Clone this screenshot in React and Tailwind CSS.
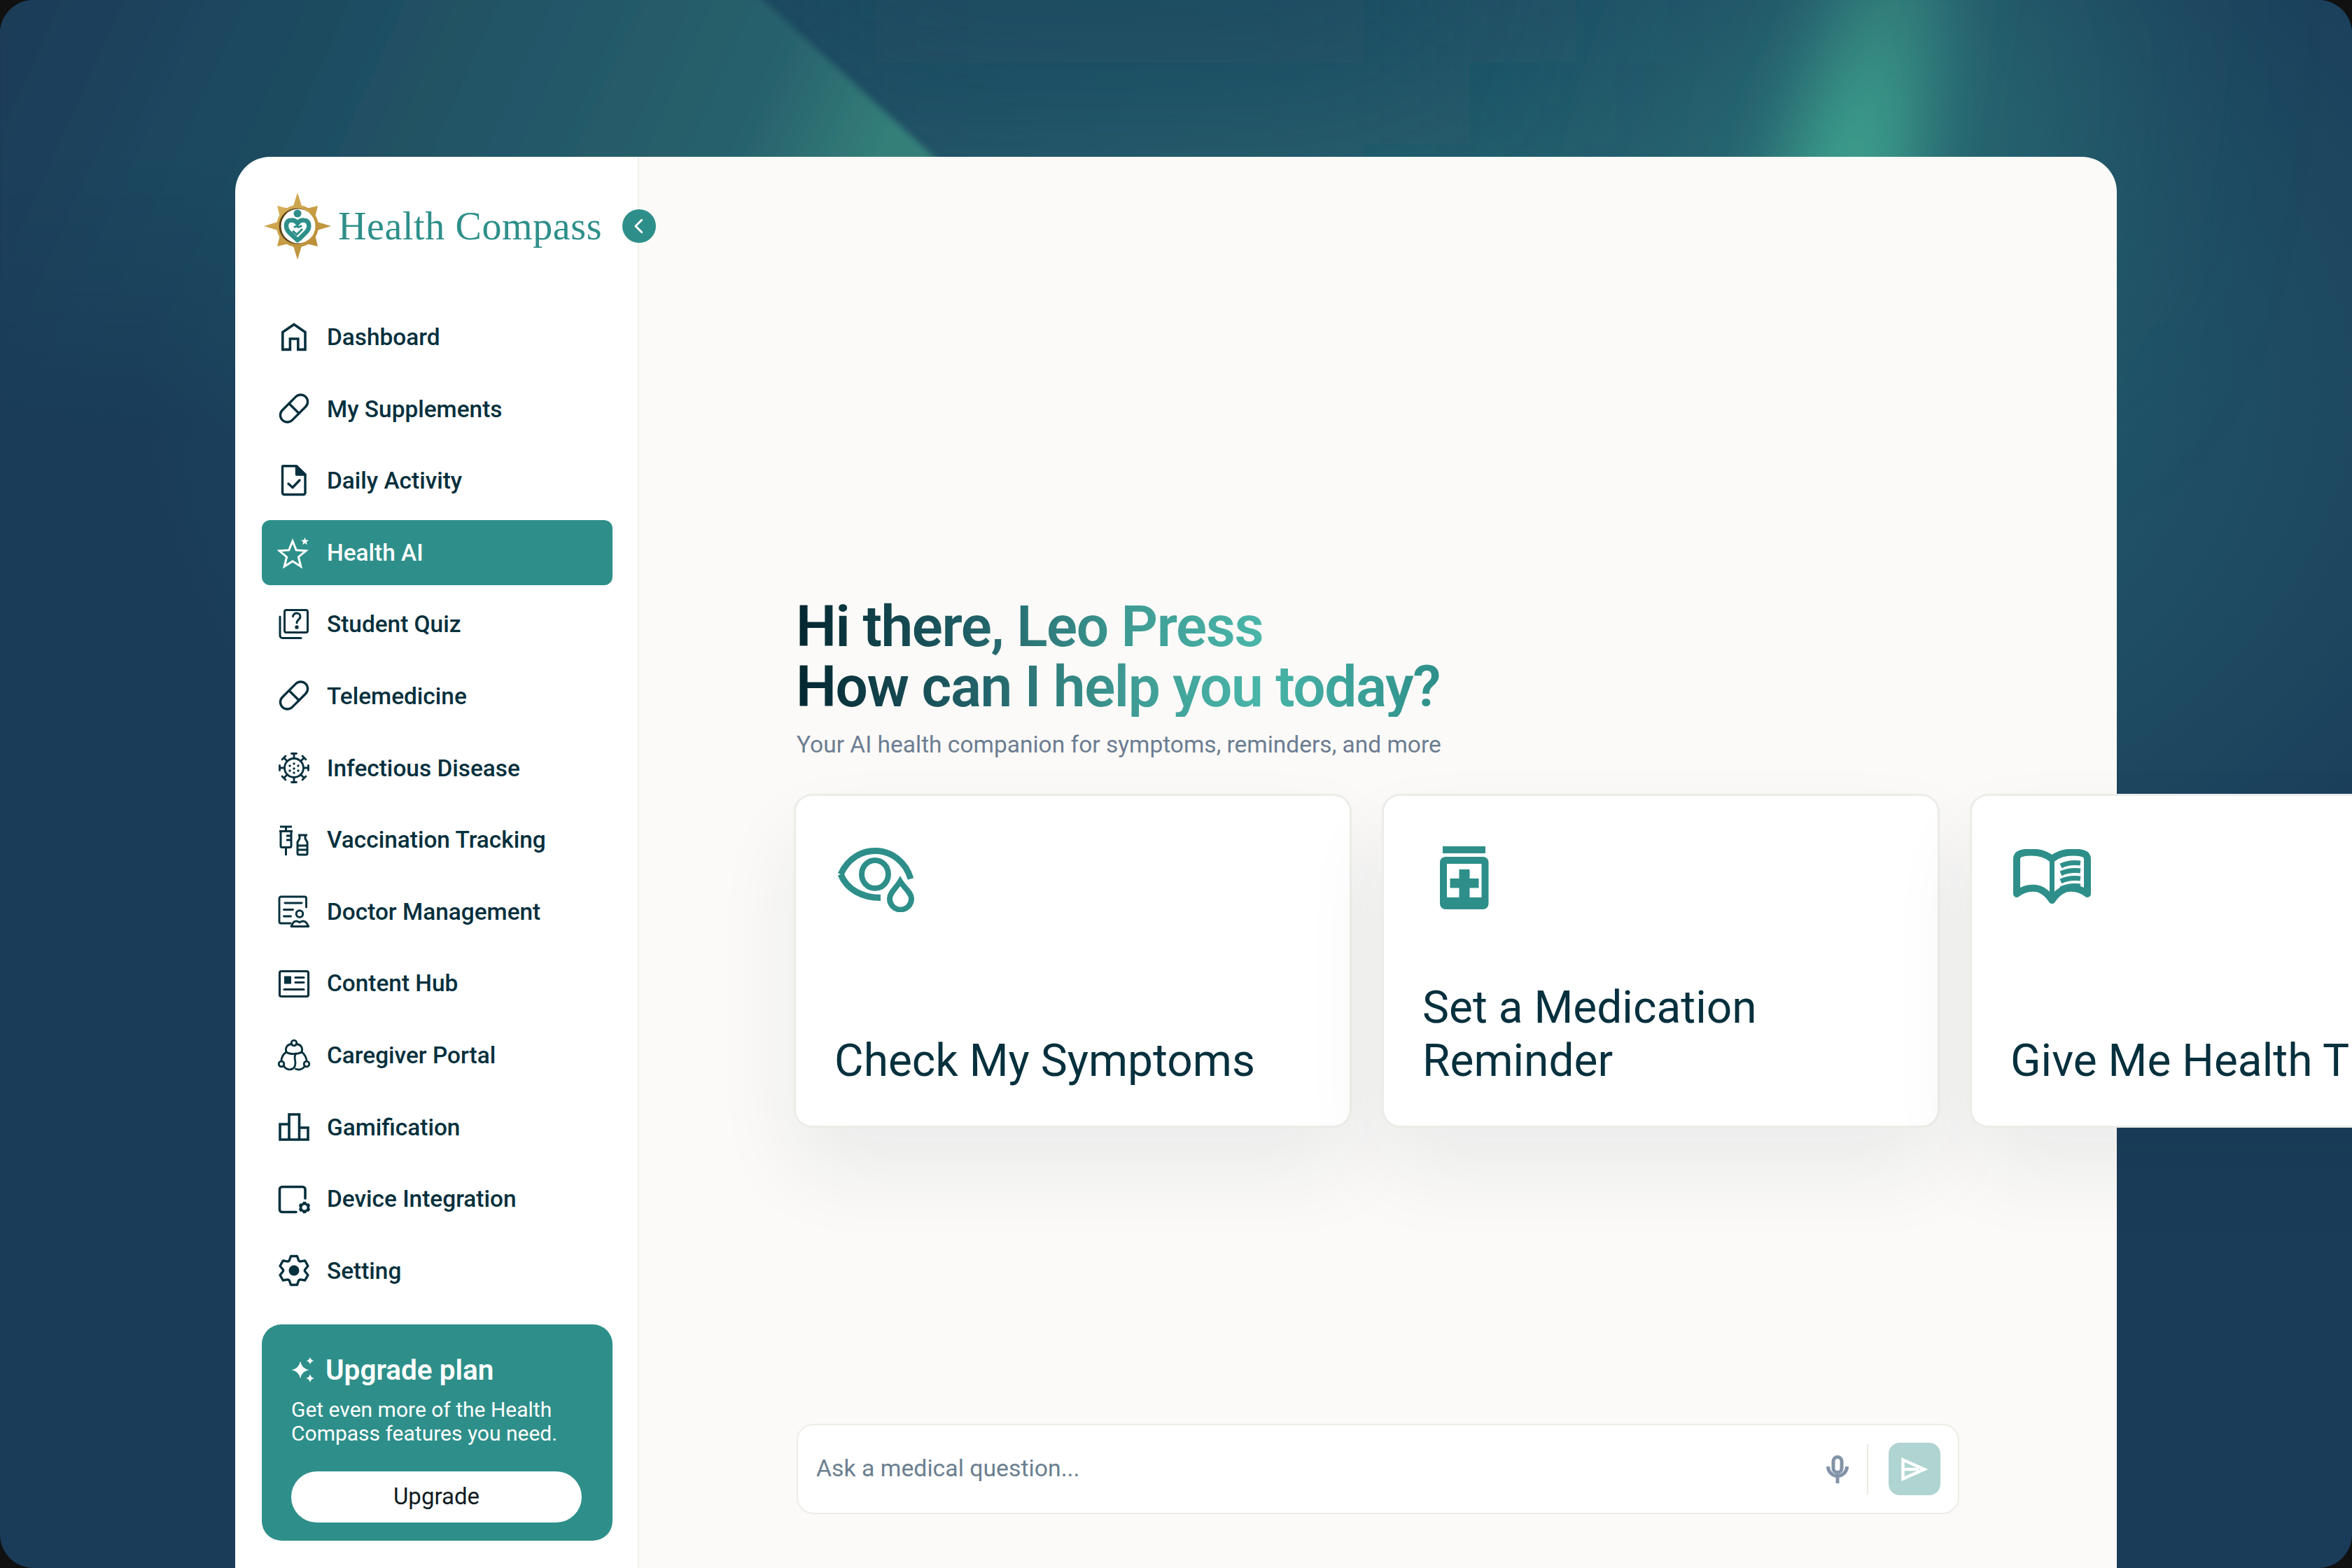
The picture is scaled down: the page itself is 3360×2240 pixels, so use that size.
import React from "react";

const INK = "#06303d";
const TEAL = "#2e8f8a";

function starPoints(cx, cy, R, r, n = 5, rot = -90) {
  const pts = [];
  for (let i = 0; i < n * 2; i++) {
    const a = ((rot + (i * 180) / n) * Math.PI) / 180;
    const q = i % 2 === 0 ? R : r;
    pts.push(`${(cx + q * Math.cos(a)).toFixed(2)},${(cy + q * Math.sin(a)).toFixed(2)}`);
  }
  return pts.join(" ");
}

function gearPath(cx, cy, R, r, n = 6) {
  const step = 360 / n;
  const pts = [];
  for (let i = 0; i < n; i++) {
    const c = -90 + i * step;
    [-0.44, -0.2, 0.2, 0.44].forEach((f, k) => {
      const a = ((c + f * step) * Math.PI) / 180;
      const q = k === 0 || k === 3 ? r : R;
      pts.push(`${(cx + q * Math.cos(a)).toFixed(2)} ${(cy + q * Math.sin(a)).toFixed(2)}`);
    });
  }
  return "M" + pts.join("L") + "Z";
}

function Ico({ children, color = INK, w = 3.4 }) {
  return (
    <svg viewBox="0 0 48 48" fill="none" stroke={color} strokeWidth={w} strokeLinejoin="round" strokeLinecap="round" className="w-[48px] h-[48px] shrink-0">
      {children}
    </svg>
  );
}

const Pill = () => (
  <Ico>
    <g transform="rotate(-45 24 23.5)">
      <rect x="0.5" y="13.5" width="47" height="20" rx="10" />
      <path d="M24 13.5v20" />
    </g>
  </Ico>
);

const icons = {
  Dashboard: () => (
    <Ico w={3.6}>
      <path strokeLinejoin="miter" strokeLinecap="butt" d="M7.8 41.4V16.4L24 5.5l16 10.9v25H29.8V26H18.4v15.4Z" />
    </Ico>
  ),
  "My Supplements": Pill,
  "Daily Activity": () => (
    <Ico>
      <path d="M8 2.8h19.5L40 15v26a2.5 2.5 0 0 1-2.5 2.5H10A2.5 2.5 0 0 1 7.5 41V3.3Z" />
      <path d="M27.5 3v12H40Z" fill={INK} />
      <path d="M16 28l6 5.5 10-10.5" />
    </Ico>
  ),
  "Health AI": () => (
    <Ico color="#ffffff" w={3}>
      <polygon points={starPoints(22, 28, 20, 8.8)} strokeLinejoin="miter" />
      <polygon points={starPoints(39.5, 8.5, 5.8, 2.4)} fill="#ffffff" stroke="none" />
    </Ico>
  ),
  "Student Quiz": () => (
    <Ico w={3}>
      <rect x="10.5" y="3.5" width="33" height="32" rx="2.5" />
      <path d="M4 13v27a3.5 3.5 0 0 0 3.5 3.5H34" />
      <path d="M22.5 12.5c.6-3 3-4.5 5.3-4.5 3 0 5.2 2 5.2 4.8 0 4.4-5 4.4-5 9" />
      <circle cx="28" cy="28" r="1.2" fill={INK} />
    </Ico>
  ),
  Telemedicine: Pill,
  "Infectious Disease": () => (
    <Ico w={2.8}>
      <circle cx="24" cy="24" r="13.5" />
      {[0, 45, 90, 135, 180, 225, 270, 315].map((a) => (
        <g key={a} transform={`rotate(${a} 24 24)`}>
          <path d="M24 10.5V3.5M20.5 3.5h7" />
        </g>
      ))}
      {[[24, 18], [18, 21], [30, 21], [24, 25], [18, 28], [30, 28], [24, 31]].map(([x, y]) => (
        <circle key={`${x}-${y}`} cx={x} cy={y} r="1.7" fill={INK} stroke="none" />
      ))}
    </Ico>
  ),
  "Vaccination Tracking": () => (
    <Ico w={3}>
      <path d="M4 5h17M12.5 5v6M3 11.5h19M5 11.5v21a2 2 0 0 0 2 2h11a2 2 0 0 0 2-2v-21M12.5 34.5V46" strokeLinecap="butt" />
      <path d="M13 18h7M13 24h7" strokeLinecap="butt" />
      <path d="M30 17h13M32 17v5l-3 5v16a2 2 0 0 0 2 2h10a2 2 0 0 0 2-2V27l-3-5v-5" strokeLinecap="butt" />
      <path d="M29 32h14M29 38h14" strokeLinecap="butt" />
    </Ico>
  ),
  "Doctor Management": () => (
    <Ico w={2.9}>
      <path d="M19 41H5.5A2.5 2.5 0 0 1 3 38.500V5.500A2.500 2.500 0 0 1 5.500 3H39a2.500 2.500 0 0 1 2.500 2.500V18" />
      <path d="M11 12h24M9.500 21.500h13M9.500 31h10" />
      <circle cx="32" cy="27.500" r="4.800" />
      <path d="M20 45.500l2.500-5c1.700-3 6-3.300 9.500-.8 3.500-2.500 8-2.200 9.800.8l3 5Z" />
    </Ico>
  ),
  "Content Hub": () => (
    <Ico w={3.2}>
      <rect x="3.500" y="6.500" width="41" height="36" rx="2.500" />
      <rect x="10" y="13.500" width="10" height="11" fill={INK} stroke="none" />
      <path d="M26 15.500h12M26 22.500h12M10 32.500h28" />
    </Ico>
  ),
  "Caregiver Portal": () => (
    <Ico w={2.8}>
      <circle cx="24" cy="7" r="3.800" />
      <circle cx="6" cy="37" r="3.800" />
      <circle cx="42" cy="37" r="3.800" />
      <path d="M20.500 8.500C14 9 11 14 13 20c-4.500 3-7 8-7 13" />
      <path d="M27.500 8.500C34 9 37 14 35 20c4 2.500 7 8 7 13" />
      <path d="M13 20c5 3.500 16 3.500 22 0" />
      <path d="M9.500 40c3 5 9 6 13 3.500 3-2 4-6.500 3-12-.7-3-.7-6 1-9.500" />
      <path d="M26.500 44c4 2 10 1 13-4" />
    </Ico>
  ),
  Gamification: () => (
    <Ico w={3.6}>
      <path strokeLinejoin="miter" strokeLinecap="butt" d="M17 42V6h14.500v36M31.500 25H44v17H4V20h13" />
    </Ico>
  ),
  "Device Integration": () => (
    <Ico w={3.6}>
      <path d="M27 42.500H7A3.500 3.500 0 0 1 3.500 39V10A3.500 3.500 0 0 1 7 6.500h29.500A3.500 3.500 0 0 1 40 10v13" />
      <path d={gearPath(39, 36, 8.500, 7, 6)} fill={INK} stroke="none" />
      <circle cx="39" cy="36" r="3.500" fill="#ffffff" stroke="none" />
    </Ico>
  ),
  Setting: () => (
    <Ico w={3.4}>
      <path d={gearPath(24, 24, 21, 15.500, 6)} />
      <circle cx="24" cy="24" r="7.500" fill={INK} stroke="none" />
    </Ico>
  ),
};

const NAV = ["Dashboard", "My Supplements", "Daily Activity", "Health AI", "Student Quiz", "Telemedicine", "Infectious Disease", "Vaccination Tracking", "Doctor Management", "Content Hub", "Caregiver Portal", "Gamification", "Device Integration", "Setting"];

function NavItem({ label }) {
  const Icon = icons[label];
  const active = label === "Health AI";
  return (
    <div className={active ? "h-[93px] rounded-[12px] bg-[#2e8f8a] text-white flex items-center pl-[22px] gap-[23px]" : "h-[93px] rounded-[12px] text-[#06303d] flex items-center pl-[22px] gap-[23px]"}>
      <Icon />
      <span className="text-[33.400px] font-medium leading-[40px] pt-[1px]">{label}</span>
    </div>
  );
}

function Logo() {
  return (
    <svg viewBox="0 0 96 96" className="w-[96px] h-[96px] shrink-0">
      <defs>
        <linearGradient id="gold" x1="0" y1="0" x2="1" y2="1">
          <stop offset="0" stopColor="#d8b25a" />
          <stop offset="0.5" stopColor="#c69c45" />
          <stop offset="1" stopColor="#b98d38" />
        </linearGradient>
      </defs>
      <polygon fill="url(#gold)" points={starPoints(48, 48, 48, 16, 4)} />
      <polygon fill="url(#gold)" points={starPoints(48, 48, 41, 22, 4, -45)} />
      <circle cx="48" cy="48" r="30" fill="url(#gold)" />
      <circle cx="47" cy="48" r="25.500" fill="#5d4115" />
      <circle cx="49" cy="48" r="24.500" fill="#ffffff" />
      <circle cx="48" cy="30" r="5.500" fill={TEAL} />
      <path d="M48 68 L37 58 C29 50 31 40 39 39.500 C43 39 46 41 48 44 C50 41 53 39 57 39.500 C65 40 67 50 60 57 L51 66" fill="none" stroke={TEAL} strokeWidth="6.500" strokeLinecap="round" />
      <path d="M43 50c2-2 3-2 5-1s4 0 6-2M41 55l6 5 8-8" fill="none" stroke={TEAL} strokeWidth="3" />
    </svg>
  );
}

function Sparkles() {
  const s = (x, y, r) => `M${x} ${y - r}Q${x + r * 0.15} ${y - r * 0.15} ${x + r} ${y}Q${x + r * 0.15} ${y + r * 0.15} ${x} ${y + r}Q${x - r * 0.15} ${y + r * 0.15} ${x - r} ${y}Q${x - r * 0.15} ${y - r * 0.15} ${x} ${y - r}Z`;
  return (
    <svg viewBox="0 0 34 36" className="w-[34px] h-[36px] shrink-0" fill="#ffffff">
      <path d={s(13, 18, 12.500)} />
      <path d={s(27, 5, 5.500)} />
      <path d={s(27, 30, 6)} />
    </svg>
  );
}

function EyeIcon() {
  return (
    <svg viewBox="0 0 112 92" className="w-[112px] h-[92px] mt-[2px]" fill="none" stroke={TEAL}>
      <path d="M5 38C16 14 36 4.500 54 4.500c24 0 44 16 51 40" strokeWidth="9" />
      <path d="M5 38C14 60 36 71.500 62 71.500" strokeWidth="9" />
      <ellipse cx="54" cy="38" rx="19" ry="20" strokeWidth="8" />
      <path d="M90 46C84 58 75 64 75 73a15.500 15.500 0 0 0 31 0C106 64 96 58 90 46Z" fill="#ffffff" stroke="#ffffff" strokeWidth="18" />
      <path d="M90 48C84 58 75 64 75 73a15.500 15.500 0 0 0 31 0C106 64 96 58 90 48Z" fill="#ffffff" strokeWidth="8" />
    </svg>
  );
}

function BottleIcon() {
  return (
    <svg viewBox="0 0 70 90" className="w-[70px] h-[90px]">
      <rect x="4" y="0" width="61" height="10" fill={TEAL} />
      <rect x="0" y="15" width="69.500" height="75" rx="8" fill={TEAL} />
      <rect x="10" y="25" width="49.500" height="48" fill="#ffffff" />
      <path d="M27.500 33h15v13h13v13.500h-13V73h-15V59.500h-13V46h13Z" fill={TEAL} />
    </svg>
  );
}

function BookIcon() {
  return (
    <svg viewBox="0 0 112 82" className="w-[112px] h-[82px] mt-[4px]" fill="none" stroke={TEAL}>
      <path strokeWidth="10" strokeLinejoin="round" d="M5 64V14C5 6 14 4.500 26 4.500 38 4.500 48 8 55.500 14 63 8 73 4.500 85 4.500 97 4.500 106 6 106 14V64C94 55 82 55 74 57 66 60 60 66 55.500 73 51 66 45 60 37 57 29 55 17 55 5 64Z" />
      <path strokeWidth="7" d="M55.500 14V70" />
      <path strokeWidth="7" d="M68 24C76 20 86 19 96 20M68 35C76 31 86 30 96 31M68 46C76 42 86 41 96 42M68 57C76 53 86 52 96 53" />
    </svg>
  );
}

function Card({ Icon, children }) {
  return (
    <div className="w-[797px] h-[477px] shrink-0 bg-white border-[3px] border-[#ecece9] rounded-[26px] pl-[55px] pr-[40px] pt-[72px] pb-[54px] flex flex-col justify-between shadow-[0_60px_120px_rgba(20,40,50,0.07)]">
      <div className="w-[112px] h-[96px] ml-[4px] flex items-start justify-center">
        <Icon />
      </div>
      <div className="text-[64px] leading-[76px] text-[#06303d] whitespace-nowrap">{children}</div>
    </div>
  );
}

function Background() {
  return (
    <svg viewBox="0 0 3360 2240" className="absolute inset-0 w-full h-full" preserveAspectRatio="none">
      <defs>
        <filter id="b1" x="-50%" y="-50%" width="200%" height="200%"><feGaussianBlur stdDeviation="55" /></filter>
        <filter id="b2" x="-50%" y="-50%" width="200%" height="200%"><feGaussianBlur stdDeviation="160" /></filter>
        <filter id="b3" x="-10%" y="-10%" width="120%" height="120%"><feGaussianBlur stdDeviation="5" /></filter>
        <linearGradient id="fade" x1="0" y1="0" x2="0" y2="1">
          <stop offset="0" stopColor="#347f7c" stopOpacity="0.7" />
          <stop offset="0.5" stopColor="#3da08d" stopOpacity="1" />
        </linearGradient>
        <radialGradient id="mid" gradientUnits="userSpaceOnUse" cx="0" cy="0" r="1" gradientTransform="translate(2000 560) scale(1800 1050)">
          <stop offset="0" stopColor="#2c6f72" />
          <stop offset="0.45" stopColor="#22586a" />
          <stop offset="1" stopColor="#1a3c59" />
        </radialGradient>
        <linearGradient id="wedge" gradientUnits="userSpaceOnUse" x1="60" y1="-100" x2="1180" y2="400">
          <stop offset="0" stopColor="#1a3c59" />
          <stop offset="0.35" stopColor="#1e4c61" />
          <stop offset="0.85" stopColor="#28626d" />
          <stop offset="1.05" stopColor="#347f79" />
        </linearGradient>
        <linearGradient id="wedgeFade" gradientUnits="userSpaceOnUse" x1="0" y1="230" x2="0" y2="620">
          <stop offset="0" stopColor="#fff" />
          <stop offset="1" stopColor="#000" />
        </linearGradient>
        <mask id="wm" maskUnits="userSpaceOnUse" x="0" y="0" width="3360" height="2240"><rect width="3360" height="2240" fill="url(#wedgeFade)" /></mask>
      </defs>
      <rect width="3360" height="2240" fill="#1a3c59" />
      <rect width="3360" height="1400" fill="url(#mid)" />
      <rect x="1100" y="-200" width="1000" height="300" fill="#1a4a5e" filter="url(#b2)" opacity="0.9" />
      <polygon points="2560,-100 3000,-100 2900,460 2360,460" fill="#2f7c7a" opacity="0.55" filter="url(#b2)" />
      <polygon points="2660,-100 2790,-100 2690,460 2490,460" fill="url(#fade)" filter="url(#b1)" />
      <g mask="url(#wm)">
        <polygon points="0,-20 1068,-20 1352,240 1352,700 0,700" fill="url(#wedge)" filter="url(#b3)" />
      </g>
    </svg>
  );
}

export default function App() {
  return (
    <div className="w-[3360px] h-[2240px] bg-[#111] overflow-hidden font-['Roboto',sans-serif]">
      <div className="relative w-full h-full rounded-[48px] overflow-hidden pt-[224px] pl-[336px]">
        <Background />
        <div className="relative flex w-[2688px] h-[2016px]">
          <aside className="relative z-10 w-[577px] shrink-0 bg-white rounded-tl-[50px] border-r-2 border-[#efefec] pl-[38px] pr-[36px] pt-[51px]">
            <div className="flex items-center h-[96px] gap-[10px] ml-[3px]">
              <Logo />
              <span className="font-['Liberation_Serif',serif] text-[56px] leading-[60px] tracking-[0.6px] text-[#2e8f8a] whitespace-nowrap">Health Compass</span>
            </div>
            <button className="absolute right-[-26px] top-[75px] w-[48px] h-[48px] rounded-full bg-[#2e8f8a] flex items-center justify-center">
              <svg viewBox="0 0 24 24" className="w-[30px] h-[30px]" fill="none" stroke="#fff" strokeWidth="2.400" strokeLinecap="round" strokeLinejoin="round"><path d="M15 5l-7 7 7 7" /></svg>
            </button>
            <nav className="mt-[64px] flex flex-col gap-[9.600px]">
              {NAV.map((n) => <NavItem key={n} label={n} />)}
            </nav>
            <div className="mt-[30px] h-[309px] bg-[#2e8f8a] rounded-[28px] pl-[42px] pr-[44px] pt-[43px] text-white">
              <div className="flex items-center gap-[15px] h-[44px]">
                <Sparkles />
                <span className="text-[40.500px] font-semibold leading-[44px]">Upgrade plan</span>
              </div>
              <p className="mt-[18px] text-[30px] leading-[34px] whitespace-nowrap">Get even more of the Health<br />Compass features you need.</p>
              <button className="mt-[37px] w-full h-[73px] rounded-full bg-white text-[#111b22] text-[33px]">Upgrade</button>
            </div>
          </aside>
          <main className="relative flex-1 min-w-0 bg-[#fbfaf8] rounded-tr-[50px] pl-[225px] pt-[628px]">
            <h1 className="w-fit -ml-[1px] font-semibold text-[82px] leading-[86px] tracking-[-1.450px] bg-[linear-gradient(90deg,#03262f_0%,#1e5a62_25%,#3f9c94_52%,#4ab5a9_72%,#2e8f8a_100%)] bg-clip-text text-transparent">
              Hi there, Leo Press<br />How can I help you today?
            </h1>
            <p className="mt-[20px] text-[33.500px] leading-[40px] text-[#6c7d92] whitespace-nowrap">Your AI health companion for symptoms, reminders, and more</p>
            <div className="mt-[50px] -ml-[4px] flex gap-[43px] w-[3000px]">
              <Card Icon={EyeIcon}>Check My Symptoms</Card>
              <Card Icon={BottleIcon}>Set a Medication<br />Reminder</Card>
              <Card Icon={BookIcon}>Give Me Health Tips</Card>
            </div>
            <div className="mt-[423px] w-[1661px] h-[129px] bg-white border-2 border-[#efece8] rounded-[24px] flex items-center pl-[26px] pr-[25px]">
              <span className="flex-1 text-[33.800px] text-[#6b7f90]">Ask a medical question...</span>
              <svg viewBox="0 0 32 40" className="w-[32px] h-[40px]" fill="none" stroke="#8393a7" strokeWidth="5">
                <rect x="10" y="2.500" width="12" height="22" rx="6" />
                <path d="M2.500 16a13.500 13.500 0 0 0 27 0M16 30v10" />
              </svg>
              <div className="ml-[26px] mr-[29px] w-[2px] h-[72px] bg-[#efe9e4]" />
              <div className="w-[74px] h-[75px] rounded-[16px] bg-[#afd4d1] flex items-center justify-center">
                <svg viewBox="0 0 38 34" className="w-[38px] h-[34px]" fill="none" stroke="#fff" strokeWidth="4.500">
                  <path d="M2.500 3.500 33 17 2.500 30.500Z" />
                  <path d="M3 17h22" />
                </svg>
              </div>
            </div>
          </main>
        </div>
      </div>
    </div>
  );
}
